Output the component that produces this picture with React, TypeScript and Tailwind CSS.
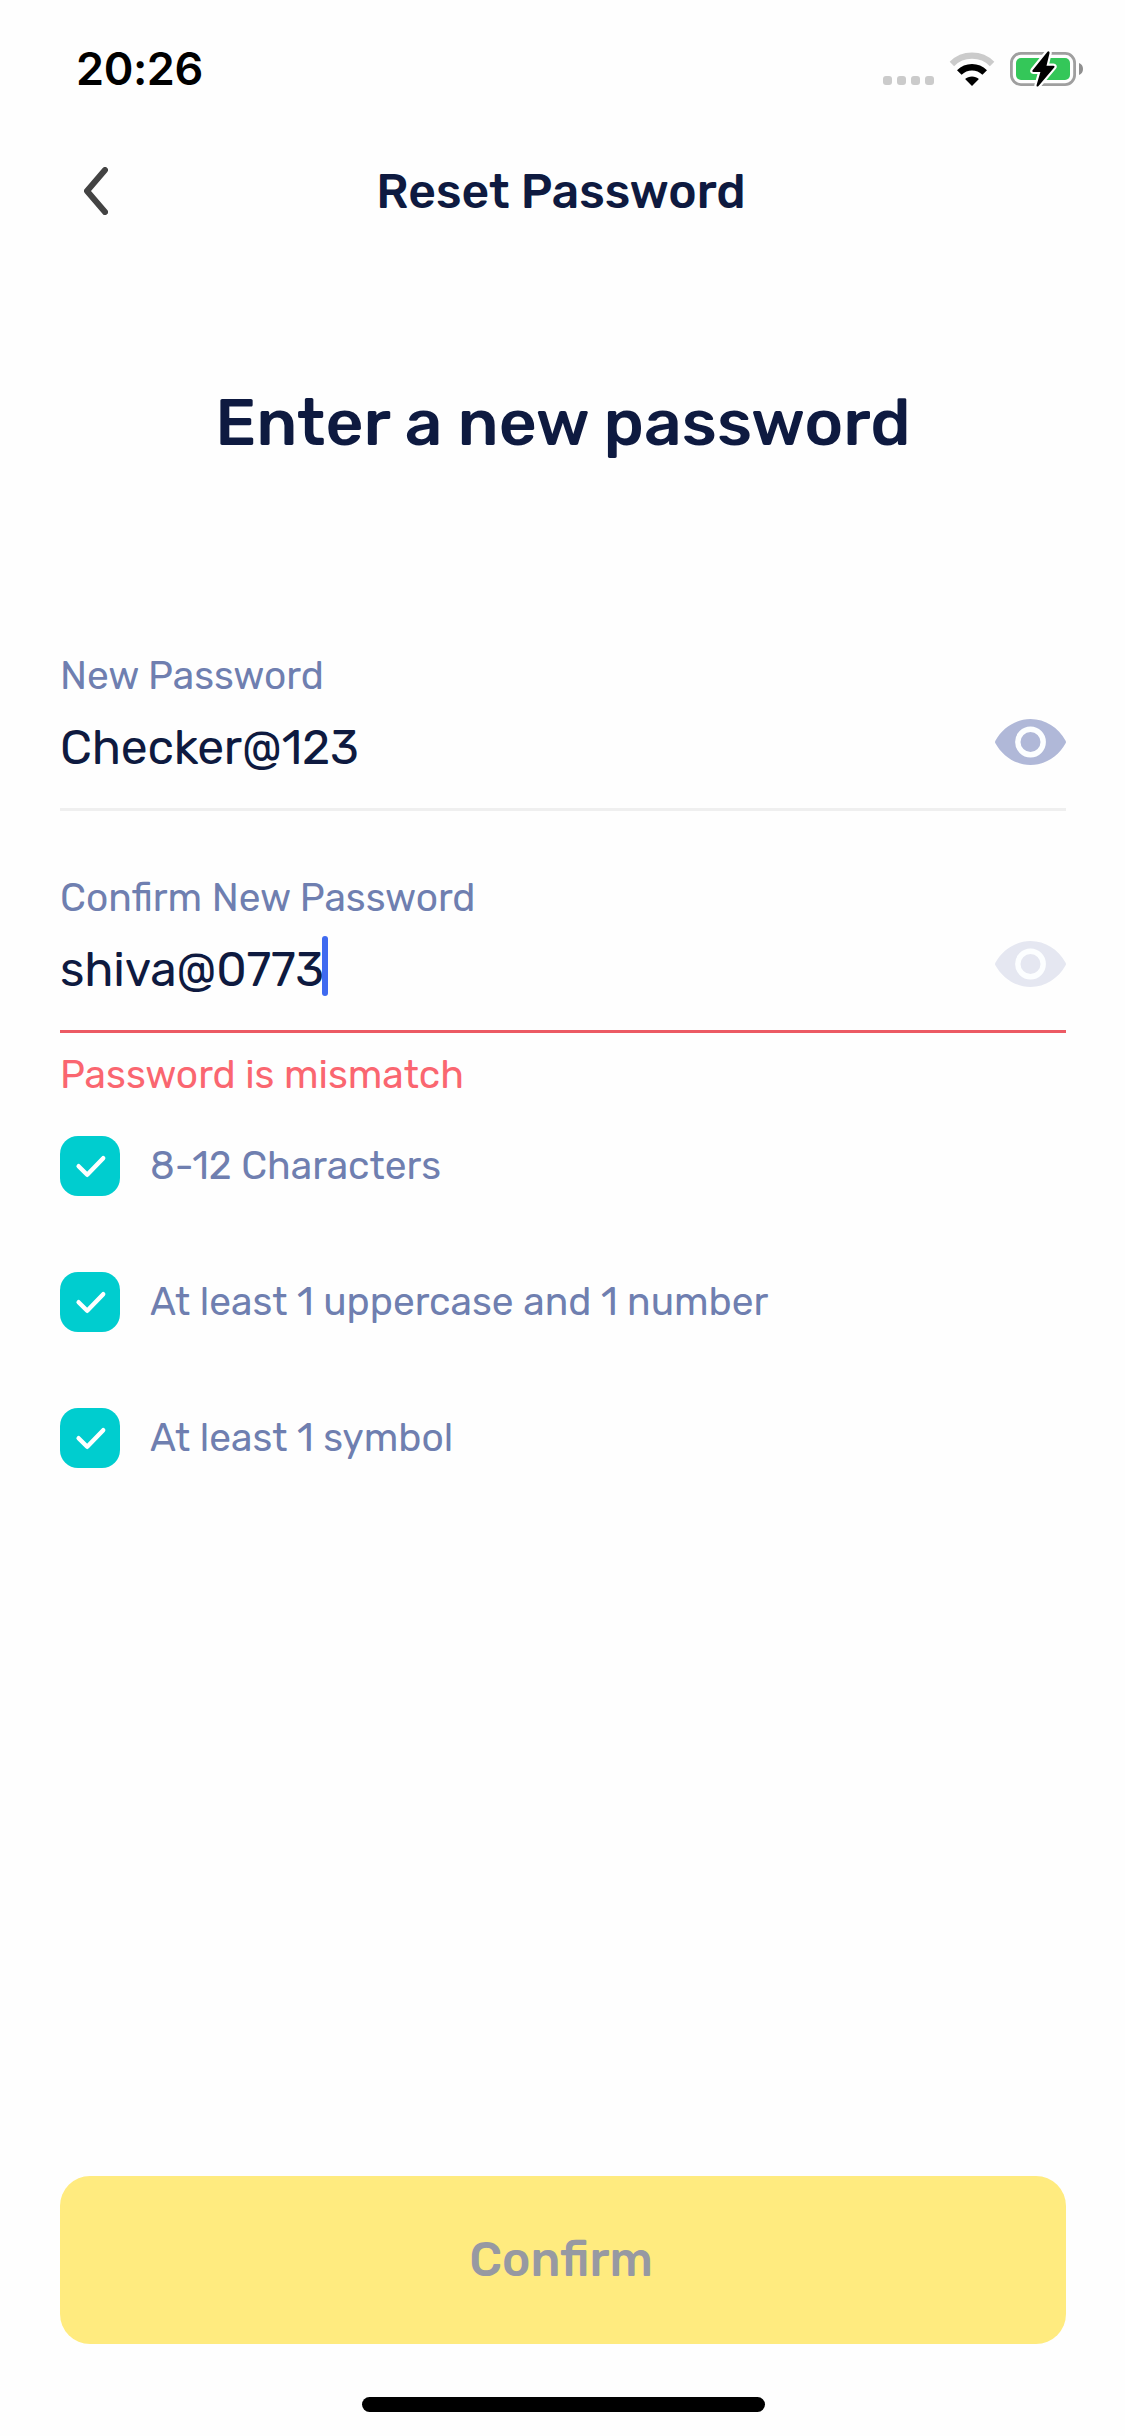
import { useState } from "react";

const rules = ["8-12 Characters", "At least 1 uppercase and 1 number", "At least 1 symbol"];

function WifiIcon() {
  return (
    <svg className="ml-[15px] h-[36px] w-[46px]" viewBox="0 0 46 36" fill="none">
      <path d="M2.9 13C8 7.800 15.200 4.700 23 4.700s15 3.100 20.100 8.300" stroke="#cbcbcb" strokeWidth="6.200" />
      <path d="M10.300 21.500c3.300-3.200 7.800-5.200 12.700-5.200s9.400 2 12.700 5.200" stroke="#000" strokeWidth="6.600" />
      <path d="M23 35l-6.900-6.900c1.800-1.700 4.200-2.700 6.900-2.700s5.100 1 6.900 2.700z" fill="#000" />
    </svg>
  );
}

function BatteryIcon() {
  return (
    <svg className="ml-[15px] h-[38px] w-[74px]" viewBox="0 0 74 38" fill="none">
      <rect x="1.400" y="3.400" width="63.200" height="31.200" rx="9.500" stroke="#9f9f9f" strokeWidth="2.800" />
      <rect x="6" y="8" width="54" height="22" rx="5" fill="#34c759" />
      <path d="M69 13c2.600 1 4 3.300 4 6s-1.400 5-4 6z" fill="#8f8f8f" />
      <path
        d="M37.300 1.900L22.600 20.200c-.6.800-.2 1.700.8 1.700h7L26.600 35c-.4 1.400.9 2.200 1.900 1L44.200 17.400c.7-.8.300-1.700-.8-1.700h-6.900l3-12.500c.3-1.500-1.200-2.500-2.200-1.300z"
        fill="#000"
        stroke="#fff"
        strokeWidth="4.400"
        paintOrder="stroke"
      />
    </svg>
  );
}

function EyeIcon({ faded }: { faded: boolean }) {
  const tone = faded ? "#e5e7f1" : "#b0b8d8";
  return (
    <svg className="h-[46px] w-[71px]" viewBox="0 0 71 46">
      <path
        d="M.4 21.700C7.500 8.700 20.700 0 35.500 0s28 8.700 35.100 21.700c.5.900.5 1.700 0 2.600C63.500 37.300 50.300 46 35.500 46S7.500 37.300.4 24.300c-.5-.9-.5-1.700 0-2.600z"
        fill={tone}
      />
      <circle cx="35.500" cy="23" r="12.700" fill={tone} stroke="#fcfeff" strokeWidth="5.400" />
    </svg>
  );
}

function Field({ label, value, error }: { label: string; value: string; error?: boolean }) {
  const [hidden, setHidden] = useState(false);
  return (
    <div className={error ? "h-[162px] border-b-[3px] border-[#ec5a64]" : "h-[162px] border-b-[3px] border-[#efefef]"}>
      <div className="flex h-full items-end justify-between">
        <div className="flex h-full flex-col pt-[2px]">
          <label className="text-[38.9px] leading-[50px] text-[#6f7fb0]">{label}</label>
          <div className="mt-[17px] flex items-center text-[48px] leading-[60px] tracking-[-0.2px] text-[#0e1a40]">
            <span>{hidden ? "•".repeat(value.length) : value}</span>
            {error && <span className="-mt-[8px] -ml-[2px] h-[60px] w-[6px] rounded-full bg-[#3f6af0]" />}
          </div>
        </div>
        <button className="mb-[43px]" onClick={() => setHidden(!hidden)} aria-label="Toggle visibility">
          <EyeIcon faded={!!error} />
        </button>
      </div>
    </div>
  );
}

export default function App() {
  return (
    <div className="flex h-[2436px] w-[1125px] flex-col bg-[#fefefe] font-['Rubik','Roboto',sans-serif]">
      <div className="flex h-[132px] items-start justify-between pr-[41px] pl-[76px]">
        <div className="mt-[39px] font-['Inter',sans-serif] text-[45px] leading-[60px] font-semibold tracking-[-0.4px] text-black">20:26</div>
        <div className="mt-[50px] flex items-center">
          <div className="mt-[22px] flex gap-[5px]">
            <span className="size-[9px] rounded-[3px] bg-[#cbcbcb]" />
            <span className="size-[9px] rounded-[3px] bg-[#cbcbcb]" />
            <span className="size-[9px] rounded-[3px] bg-[#cbcbcb]" />
            <span className="size-[9px] rounded-[3px] bg-[#cbcbcb]" />
          </div>
          <WifiIcon />
          <BatteryIcon />
        </div>
      </div>

      <header className="grid h-[120px] grid-cols-[1fr_auto_1fr] items-center pr-[3px] pl-[84px]">
        <button aria-label="Back" className="-mt-[2px] w-[24px]">
          <svg className="h-[48px] w-[24px]" viewBox="0 0 24 48" fill="none">
            <path d="M21 3L3 24l18 21" stroke="#434343" strokeWidth="6" strokeLinecap="round" strokeLinejoin="round" />
          </svg>
        </button>
        <h1 className="-ml-[84px] text-[48px] leading-[60px] font-medium text-[#0e1a40]">Reset Password</h1>
      </header>

      <main className="flex flex-1 flex-col pr-[59px] pl-[60px]">
        <h2 className="mt-[131px] text-center text-[66px] leading-[80px] font-medium text-[#0e1a40]">Enter a new password</h2>

        <div className="mt-[186px] flex flex-col gap-[60px]">
          <Field label="New Password" value="Checker@123" />
          <Field label="Confirm New Password" value="shiva@0773" error />
        </div>
        <p className="mt-[17px] text-[38.9px] leading-[50px] text-[#fa6670]">Password is mismatch</p>

        <ul className="mt-[36px] flex flex-col gap-[76px]">
          {rules.map((rule) => (
            <li key={rule} className="flex h-[60px] items-center gap-[30px]">
              <span className="flex size-[60px] items-center justify-center rounded-[18px] bg-[#00cdcf]">
                <svg className="size-[60px]" viewBox="0 0 60 60" fill="none">
                  <path d="M18.600 30.200L27.200 38.800 43.200 22.200" stroke="#fff" strokeWidth="4.400" strokeLinecap="round" strokeLinejoin="round" />
                </svg>
              </span>
              <span className="text-[38.9px] leading-[50px] text-[#6f7fb0]">{rule}</span>
            </li>
          ))}
        </ul>

        <button className="mt-auto mb-[53px] h-[168px] rounded-[30px] bg-[#ffeb7f] pr-[4px] text-[48px] leading-[60px] font-medium text-[#9799a2]">
          Confirm
        </button>
        <div className="mb-[24px] h-[15px] w-[403px] self-center rounded-full bg-black" />
      </main>
    </div>
  );
}
